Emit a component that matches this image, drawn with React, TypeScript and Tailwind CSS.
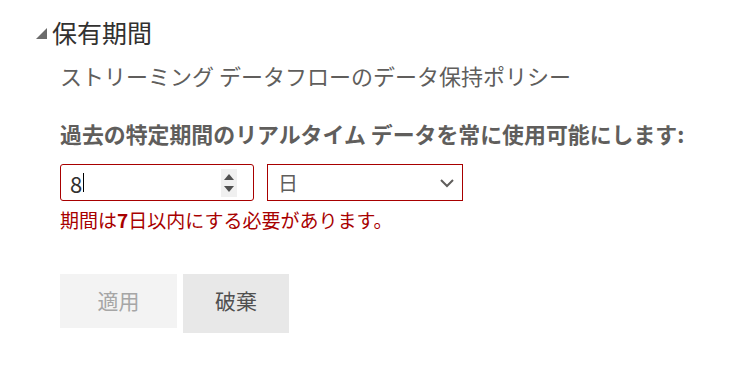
import React from "react";

export default function App() {
  const font = { fontFamily: '"Noto Sans CJK JP", "Noto Sans", sans-serif' };
  return (
    <div className="w-[739px] h-[369px] bg-white" style={font}>
      <div className="pt-[16px] pl-[36px]">
        <div className="flex items-center h-[33px]">
          <svg width="11" height="11" viewBox="0 0 11 11" className="mr-[5px] mt-[2px]">
            <polygon points="11,0 11,11 0,11" fill="#6b6b6b" />
          </svg>
          <span className="text-[25px] leading-[33px] text-[#323130]">保有期間</span>
        </div>
        <div className="pl-[24px]">
          <div className="mt-[11px] text-[22px] leading-[30px] text-[#605e5c]">
            ストリーミング データフローのデータ保持ポリシー
          </div>
          <div className="mt-[29px] text-[21.9px] leading-[30px] font-bold text-[#605e5c]">
            過去の特定期間のリアルタイム データを常に使用可能にします:
          </div>
          <div className="mt-[15px] flex gap-[13px]">
            <div className="relative w-[194px] h-[37px] border border-[#a80000] rounded-[3px] flex items-center">
              <span className="ml-[9px] text-[22px] leading-[24px] text-[#323130]">8</span>
              <span className="ml-[1px] w-[1px] h-[19px] bg-black"></span>
              <div className="absolute right-[16px] top-[4px] w-[16px] h-[28px] bg-[#f0f0f0] flex flex-col items-center justify-center gap-[6px]">
                <svg width="10" height="6" viewBox="0 0 10 6">
                  <polygon points="5,0 10,6 0,6" fill="#505050" />
                </svg>
                <svg width="10" height="6" viewBox="0 0 10 6">
                  <polygon points="0,0 10,0 5,6" fill="#505050" />
                </svg>
              </div>
            </div>
            <div className="relative w-[196px] h-[37px] border border-[#a80000] flex items-center">
              <span className="ml-[10px] text-[20px] leading-[24px] text-[#605e5c]">日</span>
              <svg width="14" height="9" viewBox="0 0 14 9" className="absolute right-[8px] top-[14px]">
                <polyline points="1,1 7,7 13,1" fill="none" stroke="#605e5c" strokeWidth="2" />
              </svg>
            </div>
          </div>
          <div className="mt-[7px] text-[19px] leading-[24px] text-[#a80000]">
            期間は<span className="font-bold">7</span>日以内にする必要があります。
          </div>
          <div className="mt-[42px] flex items-start gap-[6px]">
            <div className="w-[117px] h-[54px] bg-[#f3f3f3] text-[#a6a6a6] text-[21px] flex items-center justify-center">
              適用
            </div>
            <div className="w-[106px] h-[59px] bg-[#e8e8e8] text-[#505050] text-[21px] flex items-center justify-center pb-[5px]">
              破棄
            </div>
          </div>
        </div>
      </div>
    </div>
  );
}
